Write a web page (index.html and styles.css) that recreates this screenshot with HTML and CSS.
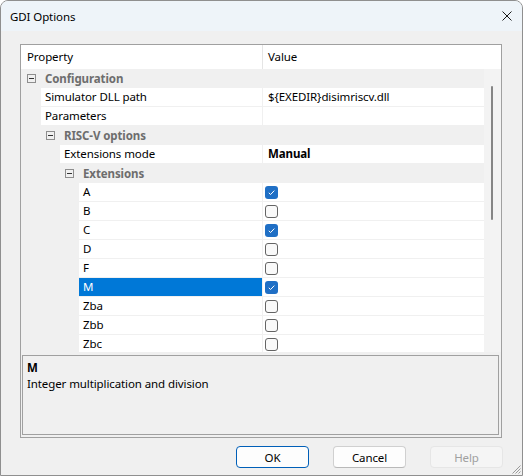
FILE: index.html
```html
<!DOCTYPE html>
<html lang="en">
<head>
    <meta charset="UTF-8">
    <title>GDI Options</title>
    <link rel="stylesheet" href="styles.css">
</head>
<body>
    <div class="window">
        <div class="titlebar">
            <span class="title">GDI Options</span>
            <svg class="close" width="10" height="10" viewBox="0 0 10 10"><path d="M0.5 0.5L9.5 9.5M9.5 0.5L0.5 9.5" stroke="#1a1a1a" stroke-width="1"/></svg>
        </div>

        <div class="dialog-body">
            <div class="grid-box">
                <div class="grid-head">
                    <div class="head-name">Property</div>
                    <div class="head-value">Value</div>
                </div>

                <div class="grid-main">
                    <div class="rows">
                        <div class="cat">
                            <span class="toggle"><svg width="9" height="9" viewBox="0 0 9 9"><rect x="0.5" y="0.5" width="8" height="8" fill="none" stroke="#8e8e8e"/><path d="M2 4.5H7" stroke="#333"/></svg></span>
                            <span class="cat-name">Configuration</span>
                        </div>
                        <div class="prop">
                            <div class="key"><div class="gutter g1"></div><div class="name">Simulator DLL path</div></div>
                            <div class="value">${EXEDIR}disimriscv.dll</div>
                        </div>
                        <div class="prop">
                            <div class="key"><div class="gutter g1"></div><div class="name">Parameters</div></div>
                            <div class="value"></div>
                        </div>
                        <div class="cat l1">
                            <span class="toggle"><svg width="9" height="9" viewBox="0 0 9 9"><rect x="0.5" y="0.5" width="8" height="8" fill="none" stroke="#8e8e8e"/><path d="M2 4.5H7" stroke="#333"/></svg></span>
                            <span class="cat-name">RISC-V options</span>
                        </div>
                        <div class="prop">
                            <div class="key"><div class="gutter g2"></div><div class="name">Extensions mode</div></div>
                            <div class="value strong">Manual</div>
                        </div>
                        <div class="cat l2">
                            <span class="toggle"><svg width="9" height="9" viewBox="0 0 9 9"><rect x="0.5" y="0.5" width="8" height="8" fill="none" stroke="#8e8e8e"/><path d="M2 4.5H7" stroke="#333"/></svg></span>
                            <span class="cat-name">Extensions</span>
                        </div>
                        <div class="prop">
                            <div class="key"><div class="gutter g3"></div><div class="name">A</div></div>
                            <div class="value check"><span class="box on"><svg width="13" height="13" viewBox="0 0 13 13"><path d="M3.8 6.8L5.6 8.5L9.3 4.6" fill="none" stroke="#fff" stroke-width="1"/></svg></span></div>
                        </div>
                        <div class="prop">
                            <div class="key"><div class="gutter g3"></div><div class="name">B</div></div>
                            <div class="value check"><span class="box"></span></div>
                        </div>
                        <div class="prop">
                            <div class="key"><div class="gutter g3"></div><div class="name">C</div></div>
                            <div class="value check"><span class="box on"><svg width="13" height="13" viewBox="0 0 13 13"><path d="M3.8 6.8L5.6 8.5L9.3 4.6" fill="none" stroke="#fff" stroke-width="1"/></svg></span></div>
                        </div>
                        <div class="prop">
                            <div class="key"><div class="gutter g3"></div><div class="name">D</div></div>
                            <div class="value check"><span class="box"></span></div>
                        </div>
                        <div class="prop">
                            <div class="key"><div class="gutter g3"></div><div class="name">F</div></div>
                            <div class="value check"><span class="box"></span></div>
                        </div>
                        <div class="prop">
                            <div class="key"><div class="gutter g3"></div><div class="name selected">M</div></div>
                            <div class="value check"><span class="box on"><svg width="13" height="13" viewBox="0 0 13 13"><path d="M3.8 6.8L5.6 8.5L9.3 4.6" fill="none" stroke="#fff" stroke-width="1"/></svg></span></div>
                        </div>
                        <div class="prop">
                            <div class="key"><div class="gutter g3"></div><div class="name">Zba</div></div>
                            <div class="value check"><span class="box"></span></div>
                        </div>
                        <div class="prop">
                            <div class="key"><div class="gutter g3"></div><div class="name">Zbb</div></div>
                            <div class="value check"><span class="box"></span></div>
                        </div>
                        <div class="prop">
                            <div class="key"><div class="gutter g3"></div><div class="name">Zbc</div></div>
                            <div class="value check"><span class="box"></span></div>
                        </div>
                    </div>
                    <div class="scrollbar"><div class="thumb"></div></div>
                </div>

                <div class="desc">
                    <div class="desc-title">M</div>
                    <div>Integer multiplication and division</div>
                </div>
            </div>

            <div class="buttons">
                <button class="btn default">OK</button>
                <button class="btn">Cancel</button>
                <button class="btn" disabled>Help</button>
            </div>
        </div>

        <svg class="grip" width="10" height="10" viewBox="0 0 10 10"><path d="M9.5 1.5L1.5 9.5M9.5 4.5L4.5 9.5M9.5 7.5L7.5 9.5" stroke="#9a9a9a" stroke-width="1"/></svg>
    </div>
</body>
</html>
```

FILE: styles.css
```css
* {
    box-sizing: border-box;
    margin: 0;
    padding: 0;
}

body {
    font-family: "Noto Sans", sans-serif;
    font-size: 11.5px;
    letter-spacing: -0.1px;
    color: #000;
    background: #fff;
}

.window {
    position: relative;
    width: 523px;
    height: 476px;
    border: 1px solid #8f8f8f;
    border-radius: 8px 8px 0 0;
    background: #f0f0f0;
    display: flex;
    flex-direction: column;
    overflow: hidden;
}

.titlebar {
    height: 30px;
    background: #eef4f9;
    display: flex;
    align-items: center;
    justify-content: space-between;
    padding: 0 10px 0 9px;
}

.dialog-body {
    flex: 1;
    padding: 13px 20px 0 19px;
    display: flex;
    flex-direction: column;
}

.grid-box {
    height: 394px;
    border: 1px solid #a0a0a0;
    display: flex;
    flex-direction: column;
}

.grid-head {
    height: 24px;
    background: #fff;
    display: flex;
    line-height: 24px;
}

.head-name {
    width: 242px;
    padding-left: 6px;
    border-right: 1px solid #e5e5e5;
}

.head-value {
    padding-left: 5px;
}

.grid-main {
    display: flex;
    height: 283px;
}

.rows {
    flex: 1;
    overflow: hidden;
}

.scrollbar {
    width: 17px;
    background: #f3f3f3;
    padding: 17px 0 0 7px;
}

.thumb {
    width: 2px;
    height: 134px;
    border-radius: 1px;
    background: #858585;
}

/* category rows */
.cat {
    height: 19px;
    display: flex;
    align-items: center;
    background: #f0f0f0;
    font-weight: bold;
    color: #6d6d6d;
}

.cat.l1 {
    padding-left: 19px;
}

.cat.l2 {
    padding-left: 38px;
}

.toggle {
    flex: none;
    width: 20px;
    padding-left: 6px;
    display: flex;
}

.cat-name {
    padding-left: 4px;
    line-height: 18px;
}

/* property rows */
.prop {
    height: 19px;
    display: flex;
}

.key {
    flex: none;
    width: 242px;
    display: flex;
    border-right: 1px solid #f0f0f0;
    background: #fff;
}

.gutter {
    flex: none;
    background: #f0f0f0;
}

.g1 { width: 20px; }
.g2 { width: 39px; }
.g3 { width: 58px; }

.name {
    flex: 1;
    padding-left: 4px;
    line-height: 18px;
    border-bottom: 1px solid #f0f0f0;
    white-space: nowrap;
}

.name.selected {
    background: #0078d7;
    color: #fff;
}

.value {
    flex: 1;
    background: #fff;
    padding-left: 5px;
    line-height: 18px;
    border-bottom: 1px solid #f0f0f0;
    white-space: nowrap;
}

.value.strong {
    font-weight: bold;
}

.value.check {
    padding-left: 2px;
    display: flex;
    align-items: center;
}

.box {
    width: 13px;
    height: 13px;
    border: 1px solid #646464;
    border-radius: 3px;
    background: #f9f9f9;
}

.box.on {
    border: none;
    background: #1f6fc5;
    display: flex;
}

.desc {
    flex: 1;
    margin: 3px 2px 2px 1px;
    border: 1px solid #a0a0a0;
    padding: 4px 4px;
    line-height: 16px;
}

.desc-title {
    font-weight: bold;
}

.buttons {
    display: flex;
    justify-content: flex-end;
    gap: 24px;
    margin: 8px -1px 0 0;
}

.btn {
    width: 73px;
    height: 22px;
    border: 1px solid #d0d0d0;
    border-bottom-color: #b9b9b9;
    border-radius: 4px;
    background: #fdfdfd;
    font-family: inherit;
    font-size: 11.5px;
    letter-spacing: -0.1px;
    color: #000;
}

.btn.default {
    border: 1px solid #005fb8;
}

.btn:disabled {
    background: #f5f5f5;
    border-color: #e6e6e6;
    color: #a0a0a0;
}

.grip {
    position: absolute;
    right: 1px;
    bottom: 1px;
}
```
